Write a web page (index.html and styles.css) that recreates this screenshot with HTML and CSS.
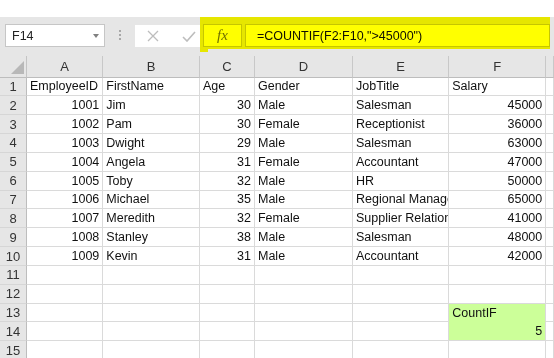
FILE: index.html
```html
<!DOCTYPE html>
<html lang="en">
<head>
    <meta charset="UTF-8">
    <meta name="viewport" content="width=device-width, initial-scale=1.0">
    <title>CountIF</title>
    <link rel="stylesheet" href="styles.css">
</head>
<body>
    <div class="gap"></div>

    <!-- name box + formula bar -->
    <div class="toolbar">
        <div class="namebox"><span>F14</span><span class="caret"></span></div>
        <div class="grip"></div>
        <div class="edit-btns">
            <svg width="12" height="12" viewBox="0 0 12 12"><path d="M1 1 L11 11 M11 1 L1 11" stroke="#bdbdbd" stroke-width="1.3" fill="none"/></svg>
            <svg width="14" height="11" viewBox="0 0 14 11"><polyline points="1,6 5,10 13,1" stroke="#bdbdbd" stroke-width="1.6" fill="none"/></svg>
        </div>
        <div class="fx">fx</div>
        <div class="formula">=COUNTIF(F2:F10,"&gt;45000")</div>
        <div class="highlight"></div>
    </div>

    <div class="sheet">
        <div class="corner"><span class="tri"></span></div>
        <div class="ch">A</div><div class="ch">B</div><div class="ch">C</div><div class="ch">D</div><div class="ch">E</div><div class="ch">F</div><div class="ch"></div>

        <div class="rh">1</div><div class="c">EmployeeID</div><div class="c">FirstName</div><div class="c">Age</div><div class="c">Gender</div><div class="c">JobTitle</div><div class="c">Salary</div><div class="c"></div>
        <div class="rh">2</div><div class="c n">1001</div><div class="c">Jim</div><div class="c n">30</div><div class="c">Male</div><div class="c">Salesman</div><div class="c n">45000</div><div class="c"></div>
        <div class="rh">3</div><div class="c n">1002</div><div class="c">Pam</div><div class="c n">30</div><div class="c">Female</div><div class="c">Receptionist</div><div class="c n">36000</div><div class="c"></div>
        <div class="rh">4</div><div class="c n">1003</div><div class="c">Dwight</div><div class="c n">29</div><div class="c">Male</div><div class="c">Salesman</div><div class="c n">63000</div><div class="c"></div>
        <div class="rh">5</div><div class="c n">1004</div><div class="c">Angela</div><div class="c n">31</div><div class="c">Female</div><div class="c">Accountant</div><div class="c n">47000</div><div class="c"></div>
        <div class="rh">6</div><div class="c n">1005</div><div class="c">Toby</div><div class="c n">32</div><div class="c">Male</div><div class="c">HR</div><div class="c n">50000</div><div class="c"></div>
        <div class="rh">7</div><div class="c n">1006</div><div class="c">Michael</div><div class="c n">35</div><div class="c">Male</div><div class="c">Regional Manager</div><div class="c n">65000</div><div class="c"></div>
        <div class="rh">8</div><div class="c n">1007</div><div class="c">Meredith</div><div class="c n">32</div><div class="c">Female</div><div class="c">Supplier Relations</div><div class="c n">41000</div><div class="c"></div>
        <div class="rh">9</div><div class="c n">1008</div><div class="c">Stanley</div><div class="c n">38</div><div class="c">Male</div><div class="c">Salesman</div><div class="c n">48000</div><div class="c"></div>
        <div class="rh">10</div><div class="c n">1009</div><div class="c">Kevin</div><div class="c n">31</div><div class="c">Male</div><div class="c">Accountant</div><div class="c n">42000</div><div class="c"></div>
        <div class="rh">11</div><div class="c"></div><div class="c"></div><div class="c"></div><div class="c"></div><div class="c"></div><div class="c"></div><div class="c"></div>
        <div class="rh">12</div><div class="c"></div><div class="c"></div><div class="c"></div><div class="c"></div><div class="c"></div><div class="c"></div><div class="c"></div>
        <div class="rh">13</div><div class="c"></div><div class="c"></div><div class="c"></div><div class="c"></div><div class="c"></div><div class="c hit hit-top">CountIF</div><div class="c"></div>
        <div class="rh">14</div><div class="c"></div><div class="c"></div><div class="c"></div><div class="c"></div><div class="c"></div><div class="c n hit">5</div><div class="c"></div>
        <div class="rh">15</div><div class="c"></div><div class="c"></div><div class="c"></div><div class="c"></div><div class="c"></div><div class="c"></div><div class="c"></div>
    </div>
</body>
</html>
```

FILE: styles.css
```css
body {
    margin: 0;
    width: 554px;
    height: 358px;
    overflow: hidden;
    background-color: #fff;
    color: #111;
    font-family: "Liberation Sans", Arial, sans-serif;
    font-size: 12.5px;
}
.gap {
    height: 17px;
}
.toolbar {
    position: relative;
    height: 39px;
    box-sizing: border-box;
    padding: 7px 0 0 5px;
    background-color: #e6e6e6;
    display: flex;
    align-items: flex-start;
}
.namebox {
    width: 100px;
    height: 23px;
    box-sizing: border-box;
    background-color: #fff;
    border: 1px solid #c6c6c6;
    display: flex;
    align-items: center;
    justify-content: space-between;
    padding: 0 5px 0 6px;
    color: #222;
}
.caret {
    width: 0;
    height: 0;
    border-left: 3.5px solid transparent;
    border-right: 3.5px solid transparent;
    border-top: 4px solid #808080;
}
.grip {
    width: 2px;
    height: 12px;
    margin: 6px 0 0 14px;
    background-image: linear-gradient(#a8a8a8 50%, transparent 50%);
    background-size: 2px 4px;
}
.edit-btns {
    width: 65px;
    height: 22px;
    margin: 1px 0 0 14px;
    box-sizing: border-box;
    background-color: #fff;
    display: flex;
    align-items: center;
    gap: 23px;
    padding-left: 12px;
}
.fx {
    width: 39px;
    height: 23px;
    margin-left: 3px;
    box-sizing: border-box;
    background-color: #fff;
    border: 1px solid #c6c6c6;
    display: flex;
    align-items: center;
    justify-content: center;
    font-family: "Liberation Serif", serif;
    font-style: italic;
    font-size: 15px;
    color: #707070;
}
.formula {
    width: 305px;
    height: 23px;
    margin-left: 3px;
    box-sizing: border-box;
    background-color: #fff;
    border: 1px solid #c6c6c6;
    display: flex;
    align-items: center;
    padding-left: 11px;
}
/* highlighter pen over the formula bar */
.highlight {
    position: absolute;
    left: 200px;
    top: 0;
    width: 350px;
    height: 35px;
    background-color: #ffff00;
    mix-blend-mode: multiply;
    clip-path: polygon(0 0, 100% 0, 100% 32px, 8px 32px, 8px 35px, 0 35px);
}
.sheet {
    display: grid;
    grid-template-columns: 27px 76.3px 96.7px 55px 98px 96.3px 97px 1fr;
    grid-template-rows: 21.5px;
    grid-auto-rows: 18.85px;
}
.corner, .ch, .rh, .c {
    box-sizing: border-box;
    display: flex;
    align-items: center;
    white-space: nowrap;
    overflow: hidden;
}
.corner {
    position: relative;
    background-color: #e6e6e6;
    border-right: 1px solid #c4c4c4;
    border-bottom: 1px solid #bdbdbd;
}
.tri {
    position: absolute;
    right: 2px;
    bottom: 3px;
    width: 0;
    height: 0;
    border-left: 13px solid transparent;
    border-bottom: 13px solid #b8b8b8;
}
.ch {
    justify-content: center;
    background-color: #e6e6e6;
    border-right: 1px solid #c8c8c8;
    border-bottom: 1px solid #bdbdbd;
    color: #333;
    font-size: 13px;
}
.rh {
    justify-content: center;
    background-color: #e6e6e6;
    border-right: 1px solid #bdbdbd;
    border-bottom: 1px solid #d6d6d6;
    color: #333;
    font-size: 13px;
}
.c {
    padding: 0 3px;
    border-right: 1px solid #dadada;
    border-bottom: 1px solid #dadada;
}
.n {
    justify-content: flex-end;
}
.hit {
    background-color: #ccff99;
}
.hit-top {
    border-bottom-color: #ccff99;
}
```
